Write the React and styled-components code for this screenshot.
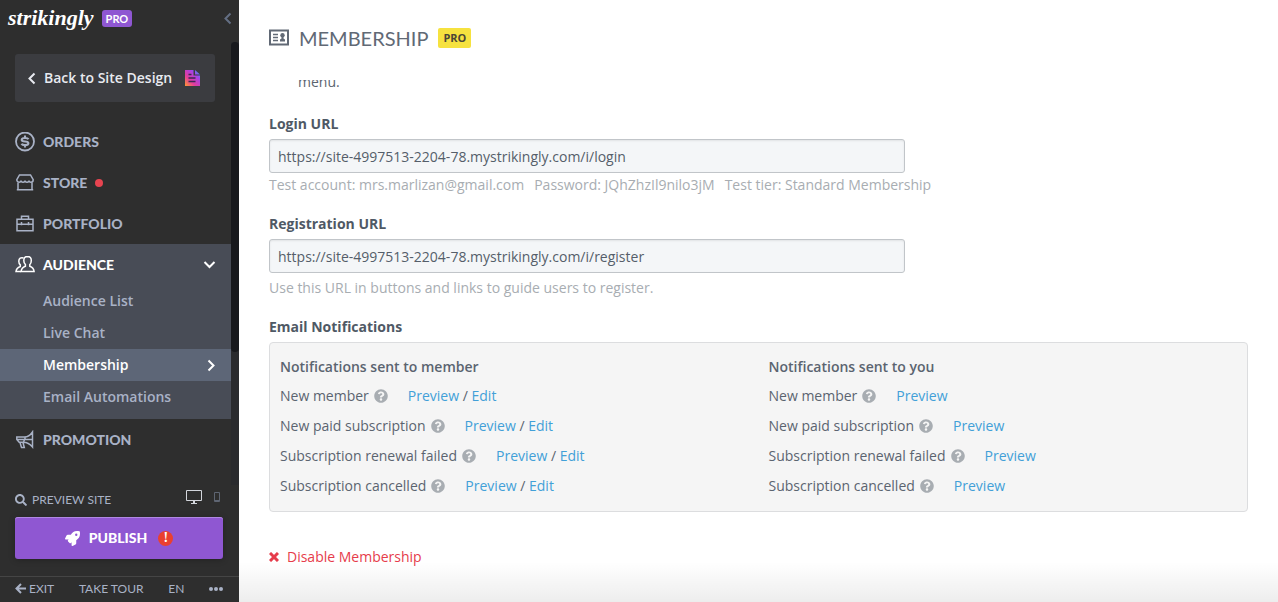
import React from 'react';
import styled, { createGlobalStyle, css } from 'styled-components';
import { FaSearch, FaRocket, FaQuestionCircle } from 'react-icons/fa';

const body = '"Open Sans", "Noto Sans", sans-serif';
const display = 'Lato, "Open Sans", sans-serif';

const GlobalStyle = createGlobalStyle`
	*, *::before, *::after {
		box-sizing: border-box;
	}

	body {
		margin: 0;
		font-family: ${body};
		font-size: 14px;
		line-height: 20px;
		color: #5b6470;
		background: #fff;
	}

	a {
		text-decoration: none;
	}

	button {
		padding: 0;
		border: 0;
		background: none;
		font: inherit;
		color: inherit;
		cursor: pointer;
	}

	svg {
		display: block;
		flex-shrink: 0;
	}
`;

const Page = styled.div`
	display: flex;
	height: 100vh;
`;

/* sidebar */

const Sidebar = styled.aside`
	display: flex;
	flex-direction: column;
	flex: 0 0 239px;
	background: #2e2e2e;
	color: #a9b2c6;
`;

const SidebarHeader = styled.header`
	display: flex;
	align-items: center;
	height: 42px;
	padding: 0 4px 6px 8px;
`;

const Logo = styled.a`
	font: italic bold 22px/32px "Liberation Serif", serif;
	color: #fff;
`;

const LogoTag = styled.span`
	margin-left: 8px;
	padding: 0 4px;
	border-radius: 3px;
	background: #8f57d2;
	color: #fff;
	font: bold 11px/17px ${display};
`;

const Collapse = styled.button`
	margin-left: auto;
	color: #646f84;
`;

const ScrollArea = styled.div`
	display: flex;
	flex: 1;
	min-height: 0;
	overflow: hidden;
`;

const ScrollTrack = styled.div`
	width: 8px;
	background: #2a2b2e;
`;

const ScrollThumb = styled.div`
	height: 70%;
	border-radius: 4px;
	background: #18191d;
`;

const Nav = styled.nav`
	flex: 1;
	padding-top: 12px;
`;

const BackLink = styled.a`
	display: flex;
	align-items: center;
	gap: 5px;
	height: 48px;
	margin: 0 16px 19px 15px;
	padding: 0 15px 0 11px;
	border-radius: 3px;
	background: #3b3c40;
	color: #e8eaf0;
	font-weight: 600;

	svg:last-child {
		margin-left: auto;
	}
`;

const NavLink = styled.a`
	display: flex;
	align-items: center;
	gap: 8px;
	height: 41px;
	padding: 0 15px;
	color: ${({ $active }) => ($active ? '#fff' : '#a9b2c6')};
	font: 900 14px/20px ${display};

	.chevron {
		margin-left: auto;
	}
`;

const Dot = styled.span`
	width: 8px;
	height: 8px;
	border-radius: 50%;
	background: #e74450;
`;

const NavGroup = styled.div`
	padding-bottom: 6px;
	background: #484c56;
`;

const SubLink = styled.a`
	display: flex;
	align-items: center;
	justify-content: space-between;
	height: 32px;
	padding: 0 14px 0 43px;
	font-weight: 600;
	color: #a9b2c6;

	${({ $active }) => $active && css`
		background: #5d6677;
		color: #fff;
	`}
`;

const PreviewBar = styled.div`
	display: flex;
	align-items: center;
	height: 30px;
	padding: 0 19px 0 15px;
	font: 12px/20px ${display};
`;

const PreviewLink = styled.a`
	display: flex;
	align-items: center;
	gap: 5px;
	color: #a9b2c6;
`;

const Devices = styled.div`
	display: flex;
	align-items: center;
	gap: 12px;
	margin-left: auto;
	padding-bottom: 6px;
`;

const DeviceButton = styled.button`
	color: ${({ $active }) => ($active ? '#d3d6dc' : '#5e6572')};
`;

const Publish = styled.button`
	display: flex;
	align-items: center;
	justify-content: center;
	gap: 9px;
	height: 42px;
	margin: 2px 16px 17px 15px;
	border-radius: 3px;
	background: #8f57d2;
	box-shadow: inset 0 1px 0 #b088e2, 0 1px 6px rgba(0, 0, 0, 0.25);
	color: #fff;
	font: 900 14px/20px ${display};
`;

const Alert = styled.span`
	width: 15px;
	height: 15px;
	margin-left: 2px;
	border-radius: 50%;
	background: #ea4030;
	font: bold 14px/14px "Liberation Serif", serif;
`;

const SidebarFooter = styled.footer`
	display: flex;
	align-items: center;
	justify-content: space-between;
	height: 26px;
	padding: 0 16px 2px 15px;
	border-top: 1px solid #454545;
	font: 12px/20px ${display};
`;

const FooterButton = styled.button`
	display: flex;
	align-items: center;
	gap: 3px;
`;

/* main column */

const Main = styled.main`
	position: relative;
	display: flex;
	flex: 1;
	flex-direction: column;
	min-width: 0;
`;

const TitleBar = styled.header`
	display: flex;
	align-items: center;
	gap: 10px;
	height: 80px;
	padding: 0 30px 5px;
	color: #616975;
`;

const Title = styled.h1`
	margin: 0;
	font: 20px/30px ${display};
`;

const ProTag = styled.span`
	padding: 0 5px;
	border-radius: 2px;
	background: #f6e23f;
	color: #4b4636;
	font: bold 11px/20px ${body};
`;

const Content = styled.div`
	flex: 1;
	min-height: 0;
	padding: 0 30px;
	overflow: hidden;
`;

const ScrolledText = styled.div`
	display: flex;
	align-items: flex-end;
	height: 12px;
	margin-bottom: 22px;
	padding-left: 29px;
	overflow: hidden;
`;

const Field = styled.div`
	margin-bottom: 19px;
`;

const Label = styled.label`
	display: block;
	margin-bottom: 5px;
	color: #4f5965;
	font-weight: 700;
`;

const PanelTitle = styled(Label).attrs({ as: 'h2' })`
	margin-top: 0;
	font-size: 14px;
`;

const UrlInput = styled.input`
	display: block;
	width: 65%;
	height: 34px;
	padding: 0 8px;
	border: 1px solid #c1c5c9;
	border-radius: 3px;
	background: #f4f6f8;
	box-shadow: inset 0 1px 2px rgba(0, 0, 0, 0.08);
	color: #555e6a;
	font: 14px/20px ${body};
`;

const Hint = styled.div`
	display: flex;
	gap: 10px;
	margin-top: ${({ $tight }) => ($tight ? '2px' : '5px')};
	color: #a8adb2;
`;

const Panel = styled.section`
	display: grid;
	grid-template-columns: 1fr 1fr;
	margin-bottom: 35px;
	padding: 14px 0 10px;
	border: 1px solid #dcdddf;
	border-radius: 4px;
	background: #f5f5f5;
`;

const Column = styled.div`
	padding: 0 10px;
`;

const ColumnTitle = styled.h3`
	margin: 0 0 4px;
	font-size: 14px;
	font-weight: 600;
`;

const Row = styled.div`
	display: flex;
	align-items: center;
	height: 30px;
`;

const Help = styled.button`
	margin: 0 20px 0 5px;
	color: #a8adb2;
`;

const Actions = styled.span`
	a {
		color: #42a0d8;
	}
`;

const Disable = styled.button`
	display: flex;
	align-items: center;
	gap: 8px;
	color: #e63c4b;
`;

const BottomFade = styled.div`
	position: absolute;
	right: 0;
	bottom: 0;
	left: 0;
	height: 40px;
	background: linear-gradient(rgba(0, 0, 0, 0), rgba(0, 0, 0, 0.07));
	pointer-events: none;
`;

/* icons */

const Stroke = ({ w = 20, h = 20, sw = 1.5, children, ...rest }) => (
	<svg
		width={w}
		height={h}
		viewBox={`0 0 ${w} ${h}`}
		fill="none"
		stroke="currentColor"
		strokeWidth={sw}
		aria-hidden="true"
		{...rest}
	>
		{children}
	</svg>
);

const Chevron = ({ dir }) => {
	const d = {
		left: 'M8.5 1.5 3.5 6.5 8.5 11.5',
		right: 'M4.5 1.5 9.5 6.5 4.5 11.5',
		down: 'M1.5 4 6.5 9 11.5 4',
	}[dir];
	return <Stroke className="chevron" w={13} h={13} sw={2}><path d={d} /></Stroke>;
};

const OrdersIcon = () => (
	<Stroke>
		<circle cx="10" cy="9.5" r="9" strokeWidth="1.8" />
		<path d="M13.5 7.3C13 6.3 11.8 6 10 6c-2 0-3.3.5-3.3 1.8S8 9.500 10 9.500s3.400.5 3.400 1.800-1.400 1.800-3.400 1.800-3-.4-3.500-1.400M10 3.500V6M10 13v2.500" strokeWidth="2.100" />
	</Stroke>
);

const StoreIcon = () => (
	<Stroke>
		<path d="M4.500 2h11l2.700 4.700c0 1.700-1 2.500-2.200 2.500s-2-.8-2-1.700c0 .9-.9 1.700-2 1.700s-2-.8-2-1.700c0 .9-.9 1.700-2 1.700s-2-.8-2-1.700c0 .9-.9 1.700-2 1.700s-2.200-.8-2.200-2.500z" />
		<path d="M3 9.500v7.300h14V9.500M1.800 16.800h16.400" />
	</Stroke>
);

const PortfolioIcon = () => (
	<Stroke>
		<path d="M2 5.200h16v11.600H2zM6.500 5V2.300h7V5M2 10.200h16M6.500 8v3.200M13.500 8v3.200" />
	</Stroke>
);

const AudienceIcon = () => (
	<Stroke>
		<path d="M12.500 1.500c-2.300 0-3.700 1.600-3.700 4 0 2 .6 3.100 1.600 4v1.800c-2.600 1-4 2-4.300 5.200h13c-.3-3.200-1.700-4.200-4.300-5.200V9.500c1-.9 1.500-2 1.500-4 0-2.400-1.400-4-3.800-4z" />
		<path d="M8.500 3C6 2 3.800 3.500 3.800 6.300c0 1.700.6 2.800 1.500 3.600v1.600C2.500 12.500 1.300 13.500 1 16.500h5" />
	</Stroke>
);

const PromotionIcon = () => (
	<Stroke>
		<path d="M17.500 2v15C15 14 12 12.200 8.500 12.200H4.200L1.800 9.500V7h7.700c3.200 0 6-2 8-5zM2 9.500h15.500M10.500 7 8.500 12.200M5 12.500l1.500 5h2.800l-1.300-5" />
	</Stroke>
);

const SiteIcon = () => (
	<svg width="15" height="16" viewBox="0 0 15 16" aria-hidden="true">
		<defs>
			<linearGradient id="site" x1="0" y1="1" x2="1" y2="0">
				<stop offset="0" stopColor="#ff9a2e" />
				<stop offset=".35" stopColor="#e23c9c" />
				<stop offset=".7" stopColor="#a642e8" />
				<stop offset="1" stopColor="#27a8f5" />
			</linearGradient>
		</defs>
		<path d="M0 0h8.500v5.500H15V16H0zM10 0l5 4.500h-5z" fill="url(#site)" />
		<path d="M3.500 4.500h3M3.500 8h7M3.500 11.500h7" stroke="#3b2853" strokeWidth="1.600" />
	</svg>
);

const MembershipIcon = () => (
	<Stroke h={17}>
		<path d="M1 1.500h18v14H1z" strokeWidth="2" />
		<path d="M4 5.500h5M4 8.500h5M4 11.500h5" strokeWidth="1.600" />
		<circle cx="13.500" cy="6.200" r="2.200" fill="currentColor" stroke="none" />
		<path d="M12.500 7h2v2.500l1.500 1v2h-5v-2l1.500-1z" fill="currentColor" stroke="none" />
	</Stroke>
);

const BackArrow = () => (
	<Stroke w={11} h={11} sw={2}><path d="M6 1 1.500 5.500 6 10M2 5.500h9" /></Stroke>
);

const DesktopIcon = () => (
	<Stroke w={16} h={14} sw={1}>
		<path d="M.5.5h15v10H.5z" />
		<path d="M5 13.500h6" />
		<path d="M8 11v2.500" strokeWidth="2" />
	</Stroke>
);

const PhoneIcon = () => (
	<Stroke w={6} h={10} sw={1}><path d="M.5.5h5v9h-5zM0 8.500h6" /></Stroke>
);

const CrossIcon = () => (
	<Stroke w={10} h={10} sw={3}><path d="M1 1l8 8M9 1 1 9" /></Stroke>
);

const DotsIcon = () => (
	<svg width="14" height="4" viewBox="0 0 14 4" fill="currentColor" aria-hidden="true">
		<circle cx="2" cy="2" r="2" />
		<circle cx="7" cy="2" r="2" />
		<circle cx="12" cy="2" r="2" />
	</svg>
);

const notifications = [
	'New member',
	'New paid subscription',
	'Subscription renewal failed',
	'Subscription cancelled',
];

const subLinks = ['Audience List', 'Live Chat', 'Membership', 'Email Automations'];

const NotificationColumn = ({ title, editable }) => (
	<Column>
		<ColumnTitle>{title}</ColumnTitle>
		{
			notifications.map(name => (
				<Row key={name}>
					{name}
					<Help type="button" aria-label={`About: ${name}`}><FaQuestionCircle size={14} /></Help>
					<Actions>
						<a href="#preview">Preview</a>
						{editable && <> / <a href="#edit">Edit</a></>}
					</Actions>
				</Row>
			))
		}
	</Column>
);

const SideMenu = () => (
	<Sidebar>
		<SidebarHeader>
			<Logo href="#home">strikingly</Logo>
			<LogoTag>PRO</LogoTag>
			<Collapse type="button" aria-label="Collapse sidebar"><Chevron dir="left" /></Collapse>
		</SidebarHeader>
		<ScrollArea>
			<Nav>
				<BackLink href="#design">
					<Chevron dir="left" />
					Back to Site Design
					<SiteIcon />
				</BackLink>
				<NavLink href="#orders"><OrdersIcon />ORDERS</NavLink>
				<NavLink href="#store"><StoreIcon />STORE<Dot /></NavLink>
				<NavLink href="#portfolio"><PortfolioIcon />PORTFOLIO</NavLink>
				<NavGroup>
					<NavLink href="#audience" $active>
						<AudienceIcon />
						AUDIENCE
						<Chevron dir="down" />
					</NavLink>
					{
						subLinks.map(name => (
							<SubLink key={name} href="#audience" $active={name === 'Membership'}>
								{name}
								{name === 'Membership' && <Chevron dir="right" />}
							</SubLink>
						))
					}
				</NavGroup>
				<NavLink href="#promotion"><PromotionIcon />PROMOTION</NavLink>
			</Nav>
			<ScrollTrack><ScrollThumb /></ScrollTrack>
		</ScrollArea>
		<PreviewBar>
			<PreviewLink href="#preview"><FaSearch size={12} />PREVIEW SITE</PreviewLink>
			<Devices>
				<DeviceButton type="button" aria-label="Desktop" $active><DesktopIcon /></DeviceButton>
				<DeviceButton type="button" aria-label="Phone"><PhoneIcon /></DeviceButton>
			</Devices>
		</PreviewBar>
		<Publish type="button">
			<FaRocket size={15} />
			PUBLISH
			<Alert>!</Alert>
		</Publish>
		<SidebarFooter>
			<FooterButton type="button"><BackArrow />EXIT</FooterButton>
			<FooterButton type="button">TAKE TOUR</FooterButton>
			<FooterButton type="button">EN</FooterButton>
			<FooterButton type="button" aria-label="More"><DotsIcon /></FooterButton>
		</SidebarFooter>
	</Sidebar>
);

const App = () => (
	<Page>
		<GlobalStyle />
		<SideMenu />
		<Main>
			<TitleBar>
				<MembershipIcon />
				<Title>MEMBERSHIP</Title>
				<ProTag>PRO</ProTag>
			</TitleBar>
			<Content>
				<ScrolledText>menu.</ScrolledText>
				<Field>
					<Label htmlFor="login-url">Login URL</Label>
					<UrlInput id="login-url" readOnly value="https://site-4997513-2204-78.mystrikingly.com/i/login" />
					<Hint $tight>
						<span>Test account: mrs.marlizan@gmail.com</span>
						<span>Password: JQhZhzIl9nilo3jM</span>
						<span>Test tier: Standard Membership</span>
					</Hint>
				</Field>
				<Field>
					<Label htmlFor="registration-url">Registration URL</Label>
					<UrlInput id="registration-url" readOnly value="https://site-4997513-2204-78.mystrikingly.com/i/register" />
					<Hint>Use this URL in buttons and links to guide users to register.</Hint>
				</Field>
				<PanelTitle>Email Notifications</PanelTitle>
				<Panel>
					<NotificationColumn title="Notifications sent to member" editable />
					<NotificationColumn title="Notifications sent to you" />
				</Panel>
				<Disable type="button"><CrossIcon />Disable Membership</Disable>
			</Content>
			<BottomFade />
		</Main>
	</Page>
);

export default App;
